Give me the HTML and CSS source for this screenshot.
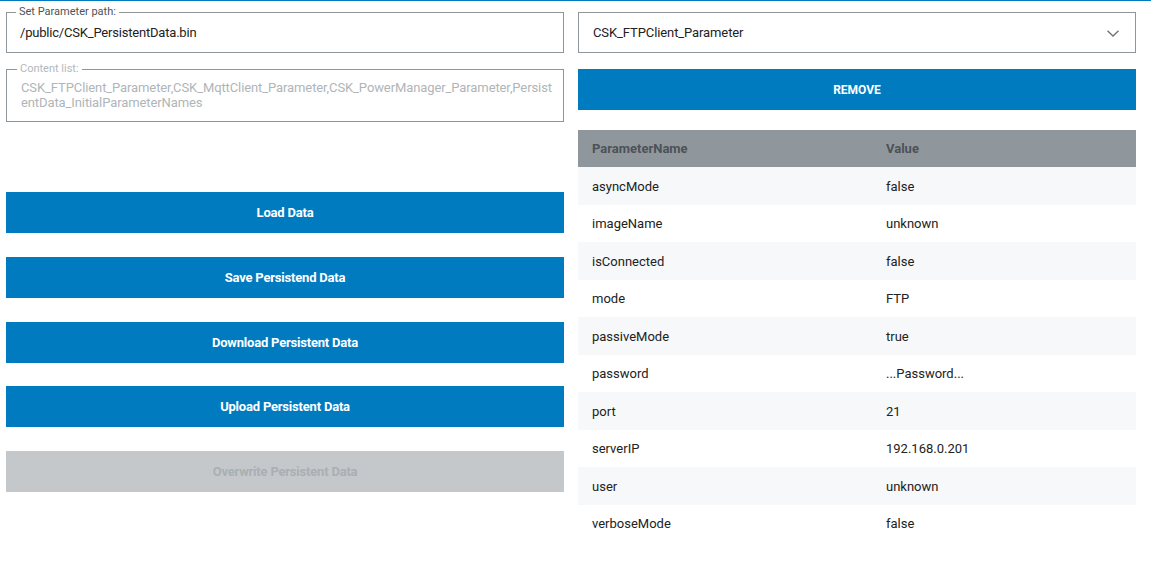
FILE: index.html
```html
<!DOCTYPE html>
<html>
<head>
<meta charset="utf-8">
<link rel="stylesheet" href="styles.css">
</head>
<body>
<div class="topline"></div>
<div class="page">
  <div class="col left">
    <fieldset class="field">
      <legend class="field-label">Set Parameter path:</legend>
      <div class="field-value">/public/CSK_PersistentData.bin</div>
    </fieldset>
    <fieldset class="field field-disabled">
      <legend class="field-label">Content list:</legend>
      <div class="field-text">CSK_FTPClient_Parameter,CSK_MqttClient_Parameter,CSK_PowerManager_Parameter,PersistentData_InitialParameterNames</div>
    </fieldset>
    <div class="buttons">
      <button class="btn">Load Data</button>
      <button class="btn">Save Persistend Data</button>
      <button class="btn">Download Persistent Data</button>
      <button class="btn">Upload Persistent Data</button>
      <button class="btn btn-disabled">Overwrite Persistent Data</button>
    </div>
  </div>
  <div class="col right">
    <div class="select">
      <span>CSK_FTPClient_Parameter</span>
      <svg class="chev" width="12" height="7" viewBox="0 0 12 7"><path d="M0.5 0.8 L6 6 L11.5 0.8" fill="none" stroke="#6b7378" stroke-width="1.3"/></svg>
    </div>
    <button class="btn btn-remove">REMOVE</button>
    <table class="params">
      <thead>
        <tr><th>ParameterName</th><th>Value</th></tr>
      </thead>
      <tbody>
        <tr><td>asyncMode</td><td>false</td></tr>
        <tr><td>imageName</td><td>unknown</td></tr>
        <tr><td>isConnected</td><td>false</td></tr>
        <tr><td>mode</td><td>FTP</td></tr>
        <tr><td>passiveMode</td><td>true</td></tr>
        <tr><td>password</td><td>...Password...</td></tr>
        <tr><td>port</td><td>21</td></tr>
        <tr><td>serverIP</td><td>192.168.0.201</td></tr>
        <tr><td>user</td><td>unknown</td></tr>
        <tr><td>verboseMode</td><td>false</td></tr>
      </tbody>
    </table>
  </div>
</div>
</body>
</html>
```
FILE: styles.css
```css
* { box-sizing: border-box; }
html, body { margin: 0; padding: 0; background: #fff; }
body {
  font-family: Roboto, "Liberation Sans", sans-serif;
  color: #222;
  width: 1151px;
  height: 568px;
  overflow: hidden;
}
.topline { height: 1px; background: #007bc0; }
.page {
  display: grid;
  grid-template-columns: 558px 558px;
  column-gap: 14px;
  padding: 5px 0 0 6px;
}
.col { display: flex; flex-direction: column; }

.field {
  margin: 0;
  border: 1px solid #8e969b;
  padding: 1px 13px 5px 13px;
  min-width: 0;
}
.field-label {
  font-size: 11px;
  line-height: 12px;
  color: #4d5358;
  padding: 0 3px;
  margin-left: -4px;
}
.field-value {
  font-size: 13px;
  line-height: 28px;
  letter-spacing: -0.2px;
  color: #222;
}
.field-disabled { margin-top: 10px; padding: 5px 8px 11px 14px; }
.field-disabled .field-label { color: #b3b8bb; }
.field-text {
  font-size: 13px;
  line-height: 15px;
  letter-spacing: -0.1px;
  color: #b0b5b9;
  word-break: break-all;
}

.buttons {
  display: flex;
  flex-direction: column;
  gap: 23.75px;
  margin-top: 70px;
}
.btn {
  display: block;
  width: 100%;
  height: 41px;
  border: 0;
  margin: 0;
  background: #007bc0;
  color: #fff;
  font-family: Roboto, "Liberation Sans", sans-serif;
  font-weight: 700;
  font-size: 13px;
  letter-spacing: -0.2px;
  cursor: pointer;
}
.btn-disabled { background: #c4c8ca; color: #a9afb3; }

.right { padding-top: 6px; }
.select {
  height: 41px;
  border: 1px solid #8e969b;
  display: flex;
  align-items: center;
  justify-content: space-between;
  padding: 0 16px 0 14px;
  font-size: 13px;
  letter-spacing: -0.1px;
  color: #222;
}
.chev { margin-top: 1px; }
.btn-remove { margin-top: 16px; font-size: 12px; letter-spacing: 0; }

.params {
  margin-top: 20px;
  width: 558px;
  border-collapse: collapse;
  font-size: 13px;
  table-layout: fixed;
}
.params th, .params td {
  text-align: left;
  padding: 0 14px;
}
.params th:first-child, .params td:first-child { width: 294px; }
.params th {
  background: #90979c;
  color: #4c5257;
  font-weight: 700;
  height: 37px;
}
.params td { height: 37.5px; color: #222; padding-top: 1px; }
.params tbody tr:nth-child(odd) { background: #f7f8f9; }
```
